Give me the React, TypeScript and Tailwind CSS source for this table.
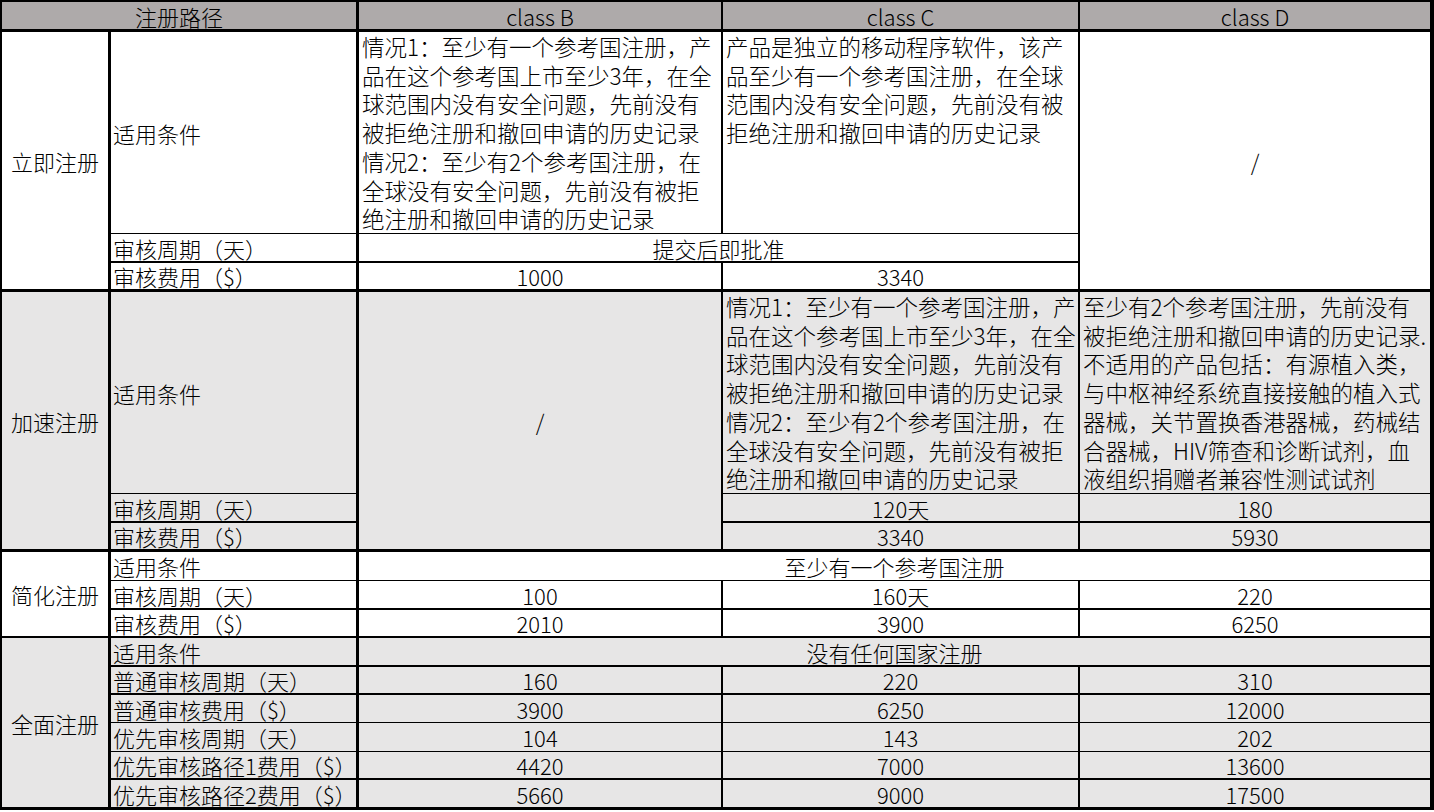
import type { ReactNode } from "react";

// lookup tables so every class is written out in full
const COL_START = ["", "col-start-1", "col-start-2", "col-start-3", "col-start-4", "col-start-5"];
const COL_SPAN = ["", "col-span-1", "col-span-2", "col-span-3", "col-span-4"];
const COL_RB = ["", "border-r-[3px]", "border-r-[3px]", "border-r-2", "border-r-2", "border-r-4"];

const ROW_START = [
  "",
  "row-start-1",
  "row-start-2",
  "row-start-3",
  "row-start-4",
  "row-start-5",
  "row-start-6",
  "row-start-7",
  "row-start-8",
  "row-start-9",
  "row-start-10",
  "row-start-11",
  "row-start-12",
  "row-start-13",
  "row-start-14",
  "row-start-15",
  "row-start-16",
];
const ROW_SPAN = ["", "row-span-1", "row-span-2", "row-span-3", "row-span-4", "row-span-5", "row-span-6"];
const ROW_BB = [
  "",
  "border-b-[3px]",
  "border-b",
  "border-b-2",
  "border-b-[3px]",
  "border-b",
  "border-b-2",
  "border-b-[3px]",
  "border-b",
  "border-b-2",
  "border-b-2",
  "border-b-2",
  "border-b-2",
  "border-b",
  "border-b",
  "border-b-2",
  "border-b-[3px]",
];

const bgFor = (r: number) => {
  if (r === 1) return "bg-[#aeaaaa]";
  if ((r >= 5 && r <= 7) || r >= 11) return "bg-[#e7e6e6]";
  return "bg-white";
};

type Kind = "center" | "label" | "text";

const KIND: Record<Kind, string> = {
  center: "flex items-center justify-center leading-[26px] whitespace-nowrap",
  label: "flex items-center pl-[2px] leading-[26px] whitespace-nowrap",
  text: "pl-[3px] leading-[28.7px] text-[22.5px] whitespace-nowrap",
};

function Cell({
  r,
  c,
  rs = 1,
  cs = 1,
  kind = "center",
  children,
}: {
  r: number;
  c: number;
  rs?: number;
  cs?: number;
  kind?: Kind;
  children?: ReactNode;
}) {
  const lastRow = r + rs - 1;
  const lastCol = c + cs - 1;
  return (
    <div
      className={`${ROW_START[r]} ${ROW_SPAN[rs]} ${COL_START[c]} ${COL_SPAN[cs]} ${ROW_BB[lastRow]} ${COL_RB[lastCol]} ${bgFor(r)} border-black ${KIND[kind]}`}
    >
      {children}
    </div>
  );
}

const Lines = ({ lines }: { lines: string[] }) => (
  <>
    {lines.map((l, i) => (
      <div key={i}>{l}</div>
    ))}
  </>
);

const CASE_TEXT = [
  "情况1：至少有一个参考国注册，产",
  "品在这个参考国上市至少3年，在全",
  "球范围内没有安全问题，先前没有",
  "被拒绝注册和撤回申请的历史记录",
  "情况2：至少有2个参考国注册，在",
  "全球没有安全问题，先前没有被拒",
  "绝注册和撤回申请的历史记录",
];

const APP_TEXT = [
  "产品是独立的移动程序软件，该产",
  "品至少有一个参考国注册，在全球",
  "范围内没有安全问题，先前没有被",
  "拒绝注册和撤回申请的历史记录",
];

const D_TEXT = [
  "至少有2个参考国注册，先前没有",
  "被拒绝注册和撤回申请的历史记录.",
  "不适用的产品包括：有源植入类，",
  "与中枢神经系统直接接触的植入式",
  "器械，关节置换香港器械，药械结",
  "合器械，HIV筛查和诊断试剂，血",
  "液组织捐赠者兼容性测试试剂",
];

const SIMPLE_ROWS = [
  { r: 9, label: "审核周期（天）", v: ["100", "160天", "220"] },
  { r: 10, label: "审核费用（$）", v: ["2010", "3900", "6250"] },
];

const FULL_ROWS = [
  { r: 12, label: "普通审核周期（天）", v: ["160", "220", "310"] },
  { r: 13, label: "普通审核费用（$）", v: ["3900", "6250", "12000"] },
  { r: 14, label: "优先审核周期（天）", v: ["104", "143", "202"] },
  { r: 15, label: "优先审核路径1费用（$）", v: ["4420", "7000", "13600"] },
  { r: 16, label: "优先审核路径2费用（$）", v: ["5660", "9000", "17500"] },
];

export default function App() {
  return (
    <div className="min-h-screen bg-white text-black text-[22px] font-light font-['Noto_Sans_CJK_SC','Liberation_Sans',sans-serif]">
      <div className="grid grid-cols-[109px_248px_364px_357px_354px] grid-rows-[30px_202px_29px_29px_202px_29px_29px_29px_29px_28px_29px_28px_28px_29px_28px_30px] border-t-2 border-l-2 border-black">
        {/* header */}
        <Cell r={1} c={1} cs={2}>注册路径</Cell>
        <Cell r={1} c={3}>class B</Cell>
        <Cell r={1} c={4}>class C</Cell>
        <Cell r={1} c={5}>class D</Cell>

        {/* 立即注册 */}
        <Cell r={2} c={1} rs={3}>立即注册</Cell>
        <Cell r={2} c={2} kind="label">适用条件</Cell>
        <Cell r={2} c={3} kind="text"><Lines lines={CASE_TEXT} /></Cell>
        <Cell r={2} c={4} kind="text"><Lines lines={APP_TEXT} /></Cell>
        <Cell r={2} c={5} rs={3}>/</Cell>
        <Cell r={3} c={2} kind="label">审核周期（天）</Cell>
        <Cell r={3} c={3} cs={2}>提交后即批准</Cell>
        <Cell r={4} c={2} kind="label">审核费用（$）</Cell>
        <Cell r={4} c={3}>1000</Cell>
        <Cell r={4} c={4}>3340</Cell>

        {/* 加速注册 */}
        <Cell r={5} c={1} rs={3}>加速注册</Cell>
        <Cell r={5} c={2} kind="label">适用条件</Cell>
        <Cell r={5} c={3} rs={3}>/</Cell>
        <Cell r={5} c={4} kind="text"><Lines lines={CASE_TEXT} /></Cell>
        <Cell r={5} c={5} kind="text"><Lines lines={D_TEXT} /></Cell>
        <Cell r={6} c={2} kind="label">审核周期（天）</Cell>
        <Cell r={6} c={4}>120天</Cell>
        <Cell r={6} c={5}>180</Cell>
        <Cell r={7} c={2} kind="label">审核费用（$）</Cell>
        <Cell r={7} c={4}>3340</Cell>
        <Cell r={7} c={5}>5930</Cell>

        {/* 简化注册 */}
        <Cell r={8} c={1} rs={3}>简化注册</Cell>
        <Cell r={8} c={2} kind="label">适用条件</Cell>
        <Cell r={8} c={3} cs={3}>至少有一个参考国注册</Cell>
        {SIMPLE_ROWS.map((row) => (
          <SimpleRow key={row.r} {...row} />
        ))}

        {/* 全面注册 */}
        <Cell r={11} c={1} rs={6}>全面注册</Cell>
        <Cell r={11} c={2} kind="label">适用条件</Cell>
        <Cell r={11} c={3} cs={3}>没有任何国家注册</Cell>
        {FULL_ROWS.map((row) => (
          <SimpleRow key={row.r} {...row} />
        ))}
      </div>
    </div>
  );
}

function SimpleRow({ r, label, v }: { r: number; label: string; v: string[] }) {
  return (
    <>
      <Cell r={r} c={2} kind="label">{label}</Cell>
      <Cell r={r} c={3}>{v[0]}</Cell>
      <Cell r={r} c={4}>{v[1]}</Cell>
      <Cell r={r} c={5}>{v[2]}</Cell>
    </>
  );
}
